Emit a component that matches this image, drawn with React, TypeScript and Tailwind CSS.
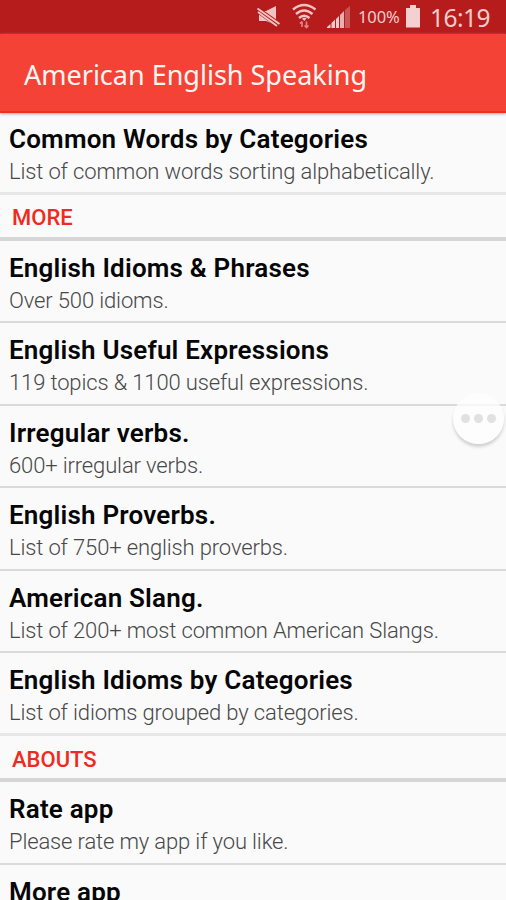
import React from "react";

type Entry = { title: string; detail: string };

const more: Entry[] = [
  { title: "English Idioms & Phrases", detail: "Over 500 idioms." },
  { title: "English Useful Expressions", detail: "119 topics & 1100 useful expressions." },
  { title: "Irregular verbs.", detail: "600+ irregular verbs." },
  { title: "English Proverbs.", detail: "List of 750+ english proverbs." },
  { title: "American Slang.", detail: "List of 200+ most common American Slangs." },
  { title: "English Idioms by Categories", detail: "List of idioms grouped by categories." },
];

function Row({ title, detail, last = false, className = "h-[82.5px] pt-[11px]" }: Entry & { last?: boolean; className?: string }) {
  return (
    <div className={`${className} shrink-0 whitespace-nowrap pl-[9px] ${last ? "border-b-[3px] border-[#e7e7e7]" : "border-b-2 border-[#dadada]"}`}>
      <div className="text-[26px] font-semibold leading-8 tracking-[0.2px] text-[#060606]">{title}</div>
      <div className="text-[22px] font-light leading-[33px] tracking-[-0.14px] text-[#484848]">{detail}</div>
    </div>
  );
}

function Section({ label, className }: { label: string; className: string }) {
  return (
    <div className={`${className} shrink-0 border-b-4 border-[#d6d6d6] pl-3 text-[22px] font-medium leading-8 text-[#f02a20]`}>
      {label}
    </div>
  );
}

function StatusBar() {
  return (
    <div className="flex h-[34px] shrink-0 items-center bg-[#b71c1c] text-[#f5cccc]">
      <svg className="ml-[256px] h-[34px] w-[98px] shrink-0" viewBox="256 0 98 34" fill="none">
        <path d="M259 11h7l10-5v19l-10-4h-7z" fill="#f0c4c4" />
        <path d="M257 9.5l24 17" stroke="#b71c1c" strokeWidth="6" />
        <path d="M257.5 8.5l22 15.5M258 12l19 14" stroke="#f0c4c4" strokeWidth="2" />
        <path d="M293 9.5Q304 .5 315.500 9.500M296 14Q304 7 312.500 14M299 18Q304 13.500 309.500 18" stroke="#f0c4c4" strokeWidth="2.4" />
        <path d="M302 18.500q2.300-1.500 4.500 0l-2.200 2.500z" fill="#f0c4c4" />
        <path d="M302 27v-5.500m-2 2 2-2m4.500 0v6m-2-2 2 2 2-2" stroke="#db8787" strokeWidth="1.6" />
        <path d="M327 28v-1l3.500-3v4zM331.500 28v-5l3.500-3.500v8.500zM336 28v-9l3-3v12z" fill="#f5caca" />
        <path d="M340 28V15l4-4v17z" fill="#e8b0b0" />
        <path d="M345 28V10l5-4v22z" fill="#c95656" />
      </svg>
      <span className="ml-[4px] w-[43px] whitespace-nowrap pt-px font-['Noto_Sans',sans-serif] text-[16.5px] leading-none tracking-[-0.1px]">100%</span>
      <svg className="ml-[4px] h-[34px] w-4 shrink-0" viewBox="0 0 16 34">
        <path d="M5 5h6v3h4v19.500H1V8h4z" fill="#f5d0d0" />
      </svg>
      <span className="ml-[9px] whitespace-nowrap pt-[3px] font-['Noto_Sans',sans-serif] text-[24.500px] leading-none tracking-[-0.5px]">16:19</span>
    </div>
  );
}

export default function App() {
  return (
    <div className="relative flex h-[900px] w-[506px] flex-col overflow-hidden bg-[#fafafa] font-[Roboto,sans-serif]">
      <StatusBar />
      <header className="z-10 flex h-[79px] shrink-0 items-center border-b-2 border-[#ef301e] bg-[#f44336] pl-[24px] pt-1.5 font-['Noto_Sans',sans-serif] text-[27px] text-[#fff5f3] shadow-[0_1px_3px_#93aaaa]">
        <span className="whitespace-nowrap">American English Speaking</span>
      </header>
      <main className="flex flex-col">
        <Row title="Common Words by Categories" detail="List of common words sorting alphabetically." last className="h-[82px] pt-[10px]" />
        <Section label="MORE" className="h-[45.5px] pt-[7px]" />
        {more.map((item, i) => (
          <Row key={item.title} title={item.title} detail={item.detail} last={i === more.length - 1} />
        ))}
        <Section label="ABOUTS" className="h-[46.5px] pt-[8px]" />
        <Row title="Rate app" detail="Please rate my app if you like." />
        <Row title="More app" detail="" />
      </main>
      <button aria-label="More options" className="absolute left-[453px] top-[393px] flex h-[51px] w-[51px] items-center justify-center gap-[4.5px] rounded-full bg-[#fefefe]/75 shadow-[0_3px_3px_#d2d2d2]">
        <span className="size-[8.5px] rounded-full bg-[#e1e1e1]" />
        <span className="size-[8.5px] rounded-full bg-[#e1e1e1]" />
        <span className="size-[8.5px] rounded-full bg-[#e1e1e1]" />
      </button>
    </div>
  );
}
